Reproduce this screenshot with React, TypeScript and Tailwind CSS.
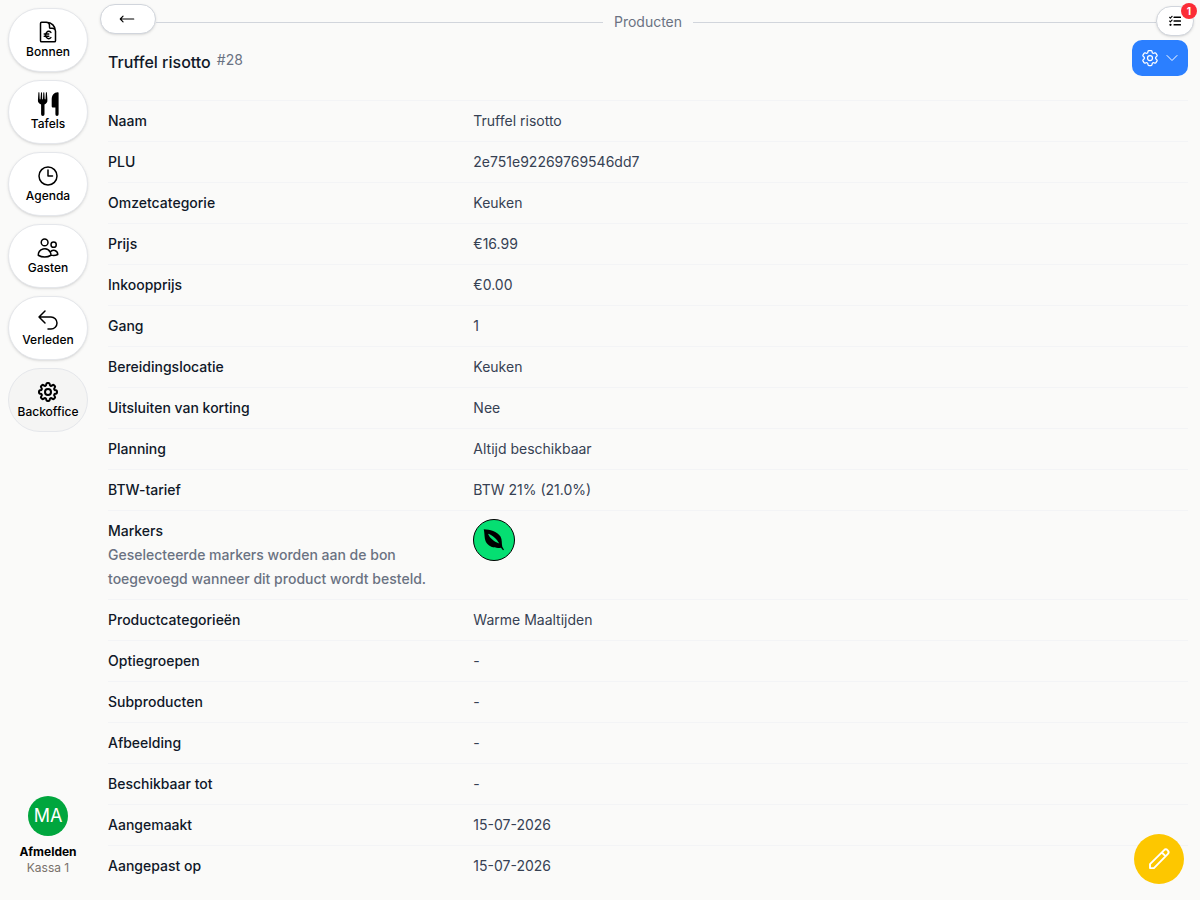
import type { ReactNode } from "react";
import {
  HiOutlineArrowLongLeft,
  HiOutlineArrowUturnLeft,
  HiOutlineChevronDown,
  HiOutlineClock,
  HiOutlineCog6Tooth,
  HiOutlineCog8Tooth,
  HiOutlineDocumentCurrencyEuro,
  HiOutlineUsers,
} from "react-icons/hi2";
import { FaTasks } from "react-icons/fa";

function CutleryIcon() {
  return (
    <svg viewBox="0 0 24 24" className="size-6" fill="currentColor" aria-hidden="true">
      <path d="M2.400.8c0-.6.9-.6 1 0L3.700 7c0 .5.800.5.800 0L5 .8c0-.7 1-.7 1 0L6.200 7c0 .5.800.5.800 0L7.300.8c0-.7 1-.7 1 0L8.700 7c0 .5.800.5.800 0L9.900.8c.1-.6.9-.6 1 0l.500 7.400c.1 2-1 3.400-2.900 4.200V22.300a1.700 1.700 0 0 1-3.400 0V12.400C3 11.600 1.800 10.200 1.900 8.200z" />
      <path d="M22.600.8V22.300a1.600 1.600 0 0 1-3.200 0V15.600h-2.300c-.8 0-1.400-.6-1.400-1.400V7.400C15.700 3 18 .3 21.800.2c.5 0 .8.200.8.600z" />
    </svg>
  );
}

function LeafIcon() {
  return (
    <svg viewBox="0 0 24 24" className="size-6" fill="currentColor" fillRule="evenodd" aria-hidden="true">
      <path d="M1.700 1.300C8 1.500 15 3.500 18.500 8.500c1.800 3 1 7 1.800 10.300L22 21.700l-1 .5-2-2.500c-5 .6-11-.2-14-4.200C1.800 11.500 3 6 1.700 1.300zM6 5.800c2 5 6.500 8 11.300 9.800C14.800 11.200 10.500 7 6 5.800z" />
    </svg>
  );
}

function PencilIcon() {
  return (
    <svg
      viewBox="0 0 24 24"
      className="size-6"
      fill="none"
      stroke="currentColor"
      strokeWidth="1.9"
      strokeLinejoin="round"
      aria-hidden="true"
    >
      <path d="M3 21.100v-3.900L16.900 3.300a2.650 2.650 0 0 1 3.800 3.800L6.900 21.100zM14.800 5.500l3.700 3.700" />
    </svg>
  );
}

type NavItem = { label: string; icon: ReactNode; active?: boolean };

const navItems: NavItem[] = [
  { label: "Bonnen", icon: <HiOutlineDocumentCurrencyEuro className="size-6" /> },
  { label: "Tafels", icon: <CutleryIcon /> },
  { label: "Agenda", icon: <HiOutlineClock className="size-6" /> },
  { label: "Gasten", icon: <HiOutlineUsers className="size-6" /> },
  { label: "Verleden", icon: <HiOutlineArrowUturnLeft className="size-6" /> },
  {
    label: "Backoffice",
    icon: <HiOutlineCog8Tooth className="size-6 [stroke-width:2]" />,
    active: true,
  },
];

type Detail = { label: string; value: ReactNode; hint?: string };

const details: Detail[] = [
  { label: "Naam", value: "Truffel risotto" },
  { label: "PLU", value: "2e751e92269769546dd7" },
  { label: "Omzetcategorie", value: "Keuken" },
  { label: "Prijs", value: "€16.99" },
  { label: "Inkoopprijs", value: "€0.00" },
  { label: "Gang", value: "1" },
  { label: "Bereidingslocatie", value: "Keuken" },
  { label: "Uitsluiten van korting", value: "Nee" },
  { label: "Planning", value: "Altijd beschikbaar" },
  { label: "BTW-tarief", value: "BTW 21% (21.0%)" },
  {
    label: "Markers",
    hint: "Geselecteerde markers worden aan de bon toegevoegd wanneer dit product wordt besteld.",
    value: (
      <span className="flex size-[42px] items-center justify-center rounded-full border border-black bg-[#05df72] text-black">
        <LeafIcon />
      </span>
    ),
  },
  { label: "Productcategorieën", value: "Warme Maaltijden" },
  { label: "Optiegroepen", value: "-" },
  { label: "Subproducten", value: "-" },
  { label: "Afbeelding", value: "-" },
  { label: "Beschikbaar tot", value: "-" },
  { label: "Aangemaakt", value: "15-07-2026" },
  { label: "Aangepast op", value: "15-07-2026" },
];

function Sidebar() {
  return (
    <aside className="sticky top-0 flex h-screen w-24 shrink-0 flex-col justify-between px-2 pt-2 pb-6">
      <nav className="flex flex-col gap-2">
        {navItems.map((item) => (
          <a
            key={item.label}
            href="#"
            aria-current={item.active ? "page" : undefined}
            className={`flex h-16 flex-col items-center justify-center rounded-[32px] border border-gray-200 text-xs font-medium text-black ${
              item.active ? "bg-stone-100" : "bg-white shadow-sm"
            }`}
          >
            {item.icon}
            {item.label}
          </a>
        ))}
      </nav>
      <button type="button" className="flex flex-col items-center text-xs">
        <span className="mb-2 flex size-10 items-center justify-center rounded-full bg-[#00a63e] text-lg text-white">
          MA
        </span>
        <span className="font-bold text-black">Afmelden</span>
        <span className="text-stone-500">Kassa 1</span>
      </button>
    </aside>
  );
}

function TopBar() {
  return (
    <header className="grid h-10 grid-cols-[1fr_auto_1fr] px-1">
      <div className="flex">
        <button
          type="button"
          aria-label="Terug"
          className="mt-1 flex h-[30px] w-14 items-center justify-center rounded-full border border-gray-300 bg-white pr-0.5 text-black shadow-sm"
        >
          <HiOutlineArrowLongLeft className="size-[18px]" />
        </button>
        <span className="mt-[22px] h-px flex-1 bg-gray-300" />
      </div>
      <h2 className="mt-3 px-[11px] text-sm text-gray-500">Producten</h2>
      <div className="flex">
        <span className="mt-[22px] h-px flex-1 bg-gray-300" />
        <button
          type="button"
          aria-label="Taken"
          className="relative mt-1.5 mr-0.5 flex h-[30px] w-[38px] items-center justify-center rounded-full border border-gray-300 bg-white text-black shadow-sm"
        >
          <FaTasks className="size-3" />
          <span className="absolute -top-1 -right-1 flex size-4 items-center justify-center rounded-full bg-[#fb2c36] text-[10px] font-bold text-white">
            1
          </span>
        </button>
      </div>
    </header>
  );
}

export default function App() {
  return (
    <div className="flex min-h-screen bg-stone-50 font-['Inter',sans-serif]">
      <Sidebar />
      <main className="min-w-0 flex-1">
        <TopBar />
        <div className="px-3">
          <div className="flex items-start justify-between pb-6">
            <div className="flex gap-1.5 pt-2.5">
              <h1 className="text-base font-medium text-gray-900">Truffel risotto</h1>
              <span className="text-sm text-gray-500">#28</span>
            </div>
            <button
              type="button"
              aria-label="Acties"
              className="flex h-9 items-center gap-1 rounded-[10px] bg-[#2b7fff] px-2 text-white"
            >
              <HiOutlineCog6Tooth className="size-5" />
              <HiOutlineChevronDown className="size-4" />
            </button>
          </div>
          <dl className="text-sm leading-6">
            {details.map((row) => (
              <div
                key={row.label}
                className="grid grid-cols-3 gap-4 border-t border-gray-100 py-2"
              >
                <dt className="font-medium text-gray-900">
                  {row.label}
                  {row.hint && <p className="text-gray-500">{row.hint}</p>}
                </dt>
                <dd className="col-span-2 text-gray-700">{row.value}</dd>
              </div>
            ))}
          </dl>
        </div>
      </main>
      <button
        type="button"
        aria-label="Bewerken"
        className="fixed right-4 bottom-4 flex size-[50px] items-center justify-center rounded-full bg-[#fdc700] text-white"
      >
        <PencilIcon />
      </button>
    </div>
  );
}
